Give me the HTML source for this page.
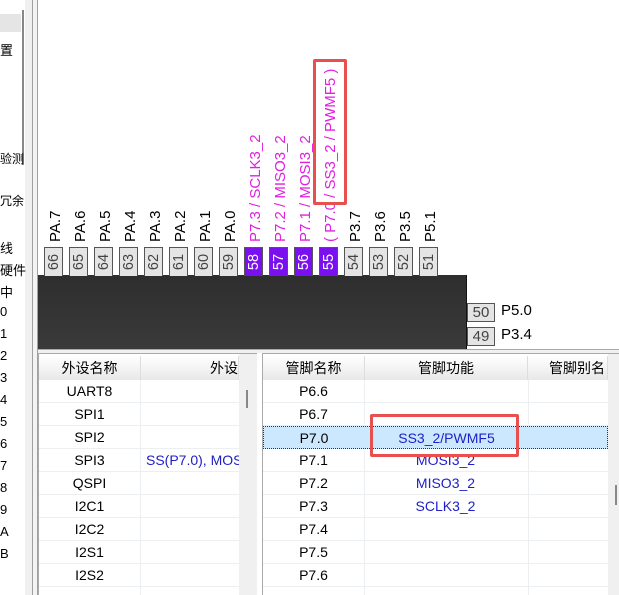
<!DOCTYPE html>
<html><head><meta charset="utf-8"><style>
*{margin:0;padding:0;box-sizing:border-box}
body{width:619px;height:595px;overflow:hidden;background:#fff;position:relative;font-family:"Liberation Sans","Noto Sans CJK SC",sans-serif;font-size:13px;color:#000}
.a{position:absolute}
.pin{position:absolute;top:247px;width:19px;height:29px;background:#e4e4e4;border:1px solid #555;border-bottom:none}
.pin span{position:absolute;left:50%;top:50%;transform:translate(-50%,-50%) rotate(-90deg);white-space:nowrap;font-size:14.5px;color:#444}
.pin.p{background:#7a10f0}
.pin.p span{color:#fff}
.lab{position:absolute;width:19px;height:0}
.lab span{position:absolute;transform-origin:0 0;transform:rotate(-90deg);left:1px;top:0;font-size:15px;white-space:nowrap}
.row{position:absolute;height:23px;border-bottom:1px solid #eceff2;line-height:22px;font-size:14px}
.c{position:absolute;top:0;text-align:center;white-space:nowrap;overflow:hidden}
.hd{position:absolute;top:356px;height:24px;background:linear-gradient(#fff,#e8e8e8);border-right:1px solid #ddd;text-align:center;line-height:24px;font-size:14px;overflow:hidden;white-space:nowrap}
.blue{color:#2020c8}
.lt{position:absolute;left:0;font-size:13px}
</style></head><body>
<div class="a" style="left:0;top:14px;width:21px;height:18px;background:#e5e5e5"></div>
<div class="a" style="left:22px;top:10px;width:2px;height:155px;background:#888"></div>
<div class="a" style="left:25px;top:0;width:7px;height:595px;background:#f0f0f0"></div>
<div class="a" style="left:32px;top:0;width:1px;height:595px;background:#a0a0a0"></div>
<div class="a" style="left:33px;top:0;width:4px;height:595px;background:#f3f3f3"></div>
<div class="a" style="left:37px;top:0;width:1px;height:595px;background:#a0a0a0"></div>
<div class="lt" style="top:40px">置</div>
<div class="lt" style="top:150px;font-size:12px">验测</div>
<div class="lt" style="top:192px;font-size:12px">冗余</div>
<div class="lt" style="top:238px">线</div>
<div class="lt" style="top:260px">硬件</div>
<div class="lt" style="top:282px">中</div>
<div class="lt" style="top:304px">0</div><div class="lt" style="top:326px">1</div><div class="lt" style="top:348px">2</div><div class="lt" style="top:370px">3</div><div class="lt" style="top:392px">4</div><div class="lt" style="top:414px">5</div><div class="lt" style="top:436px">6</div><div class="lt" style="top:458px">7</div><div class="lt" style="top:480px">8</div><div class="lt" style="top:502px">9</div><div class="lt" style="top:524px">A</div><div class="lt" style="top:546px">B</div>

<div class="a" style="left:38px;top:275px;width:429px;height:74px;background:linear-gradient(#2e2e2e,#3a3a3a);border-right:1px solid #111"></div>
<div class="pin" style="left:44px"><span>66</span></div>
<div class="pin" style="left:69px"><span>65</span></div>
<div class="pin" style="left:94px"><span>64</span></div>
<div class="pin" style="left:119px"><span>63</span></div>
<div class="pin" style="left:144px"><span>62</span></div>
<div class="pin" style="left:169px"><span>61</span></div>
<div class="pin" style="left:194px"><span>60</span></div>
<div class="pin" style="left:219px"><span>59</span></div>
<div class="pin p" style="left:244px"><span>58</span></div>
<div class="pin p" style="left:269px"><span>57</span></div>
<div class="pin p" style="left:294px"><span>56</span></div>
<div class="pin p" style="left:319px"><span>55</span></div>
<div class="pin" style="left:344px"><span>54</span></div>
<div class="pin" style="left:369px"><span>53</span></div>
<div class="pin" style="left:394px"><span>52</span></div>
<div class="pin" style="left:419px"><span>51</span></div>
<div class="lab" style="left:46px;top:242px"><span>PA.7</span></div>
<div class="lab" style="left:71px;top:242px"><span>PA.6</span></div>
<div class="lab" style="left:96px;top:242px"><span>PA.5</span></div>
<div class="lab" style="left:121px;top:242px"><span>PA.4</span></div>
<div class="lab" style="left:146px;top:242px"><span>PA.3</span></div>
<div class="lab" style="left:171px;top:242px"><span>PA.2</span></div>
<div class="lab" style="left:196px;top:242px"><span>PA.1</span></div>
<div class="lab" style="left:221px;top:242px"><span>PA.0</span></div>
<div class="lab" style="left:246px;top:242px;color:#e020e0"><span>P7.3 / SCLK3_2</span></div>
<div class="lab" style="left:271px;top:242px;color:#e020e0"><span>P7.2 / MISO3_2</span></div>
<div class="lab" style="left:296px;top:242px;color:#e020e0"><span>P7.1 / MOSI3_2</span></div>
<div class="lab" style="left:321px;top:242px;color:#e020e0"><span>( P7.0 / SS3_2 / PWMF5 )</span></div>
<div class="lab" style="left:346px;top:242px"><span>P3.7</span></div>
<div class="lab" style="left:371px;top:242px"><span>P3.6</span></div>
<div class="lab" style="left:396px;top:242px"><span>P3.5</span></div>
<div class="lab" style="left:421px;top:242px"><span>P5.1</span></div>
<div class="a" style="left:313px;top:59px;width:34px;height:146px;border:3px solid #e85050;border-radius:2px"></div>
<div class="a" style="left:467px;top:303px;width:28px;height:19px;background:#e4e4e4;border:1px solid #555;text-align:center;line-height:17px;font-size:15px;color:#444">50</div>
<div class="a" style="left:501px;top:302px;font-size:15px">P5.0</div>
<div class="a" style="left:467px;top:327px;width:28px;height:19px;background:#e4e4e4;border:1px solid #555;text-align:center;line-height:17px;font-size:15px;color:#444">49</div>
<div class="a" style="left:501px;top:326px;font-size:15px">P3.4</div>

<div class="a" style="left:38px;top:349px;width:581px;height:4px;background:#f0f0f0;border-top:1px solid #aaa"></div>
<div class="a" style="left:38px;top:353px;width:219px;height:242px;border:1px solid #aaa;border-bottom:none"></div>
<div class="hd" style="left:39px;width:102px">外设名称</div>
<div class="hd" style="left:141px;width:98px;text-align:right">外设</div>
<div class="a" style="left:239px;top:354px;width:18px;height:241px;background:#f0f0f0"></div>
<div class="a" style="left:246px;top:390px;width:2px;height:18px;background:#888"></div>
<div class="a" style="left:140px;top:380px;width:1px;height:215px;background:#eceff2"></div>
<div class="row" style="left:39px;top:380px;width:200px"><div class="c" style="left:0;width:101px">UART8</div></div>
<div class="row" style="left:39px;top:403px;width:200px"><div class="c" style="left:0;width:101px">SPI1</div></div>
<div class="row" style="left:39px;top:426px;width:200px"><div class="c" style="left:0;width:101px">SPI2</div></div>
<div class="row" style="left:39px;top:449px;width:200px"><div class="c" style="left:0;width:101px">SPI3</div><div class="c blue" style="left:107px;width:93px;text-align:left">SS(P7.0), MOSI</div></div>
<div class="row" style="left:39px;top:472px;width:200px"><div class="c" style="left:0;width:101px">QSPI</div></div>
<div class="row" style="left:39px;top:495px;width:200px"><div class="c" style="left:0;width:101px">I2C1</div></div>
<div class="row" style="left:39px;top:518px;width:200px"><div class="c" style="left:0;width:101px">I2C2</div></div>
<div class="row" style="left:39px;top:541px;width:200px"><div class="c" style="left:0;width:101px">I2S1</div></div>
<div class="row" style="left:39px;top:564px;width:200px"><div class="c" style="left:0;width:101px">I2S2</div></div>

<div class="a" style="left:262px;top:353px;width:357px;height:242px;border:1px solid #aaa;border-right:none;border-bottom:none"></div>
<div class="hd" style="left:263px;width:102px">管脚名称</div>
<div class="hd" style="left:365px;width:163px">管脚功能</div>
<div class="hd" style="left:528px;width:80px;text-align:right;padding-right:2px">管脚别名</div>
<div class="a" style="left:608px;top:354px;width:11px;height:241px;background:#f0f0f0"></div>
<div class="a" style="left:615px;top:485px;width:2px;height:20px;background:#888"></div>
<div class="a" style="left:364px;top:380px;width:1px;height:215px;background:#eceff2"></div>
<div class="a" style="left:528px;top:380px;width:1px;height:215px;background:#eceff2"></div>
<div class="row" style="left:263px;top:380px;width:345px"><div class="c" style="left:0;width:101px">P6.6</div></div>
<div class="row" style="left:263px;top:403px;width:345px"><div class="c" style="left:0;width:101px">P6.7</div></div>
<div class="row" style="left:263px;top:426px;width:345px;background:#cce8ff;border:1px dotted #333"><div class="c" style="left:0;width:100px">P7.0</div><div class="c blue" style="left:101px;width:163px">SS3_2/PWMF5</div></div>
<div class="row" style="left:263px;top:449px;width:345px"><div class="c" style="left:0;width:101px">P7.1</div><div class="c blue" style="left:101px;width:163px">MOSI3_2</div></div>
<div class="row" style="left:263px;top:472px;width:345px"><div class="c" style="left:0;width:101px">P7.2</div><div class="c blue" style="left:101px;width:163px">MISO3_2</div></div>
<div class="row" style="left:263px;top:495px;width:345px"><div class="c" style="left:0;width:101px">P7.3</div><div class="c blue" style="left:101px;width:163px">SCLK3_2</div></div>
<div class="row" style="left:263px;top:518px;width:345px"><div class="c" style="left:0;width:101px">P7.4</div></div>
<div class="row" style="left:263px;top:541px;width:345px"><div class="c" style="left:0;width:101px">P7.5</div></div>
<div class="row" style="left:263px;top:564px;width:345px"><div class="c" style="left:0;width:101px">P7.6</div></div>
<div class="a" style="left:370px;top:414px;width:149px;height:43px;border:3px solid #e85050;border-radius:2px"></div>
</body></html>
